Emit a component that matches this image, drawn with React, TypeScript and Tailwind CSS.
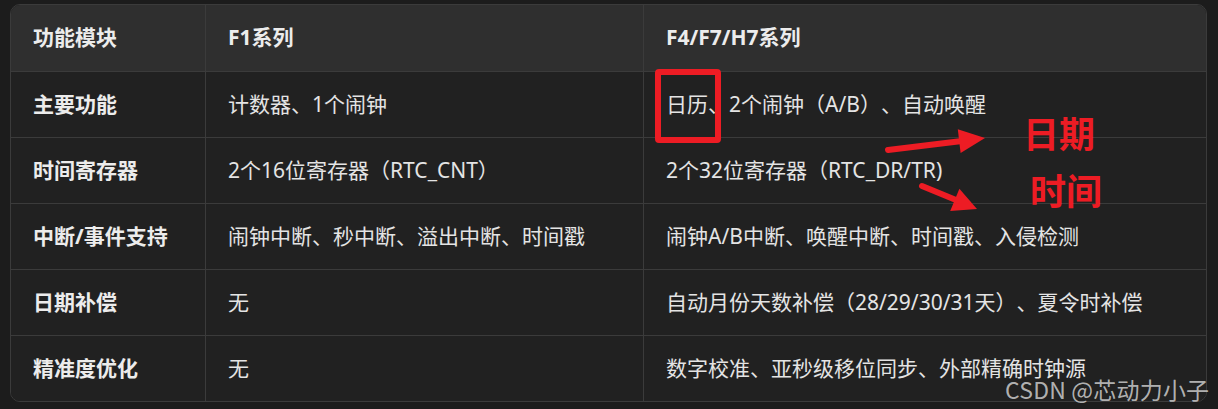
import React from "react";

type Row = { label: string; f1: string; f4: string };

const rows: Row[] = [
  { label: "主要功能", f1: "计数器、1个闹钟", f4: "日历、2个闹钟（A/B）、自动唤醒" },
  { label: "时间寄存器", f1: "2个16位寄存器（RTC_CNT）", f4: "2个32位寄存器（RTC_DR/TR)" },
  { label: "中断/事件支持", f1: "闹钟中断、秒中断、溢出中断、时间戳", f4: "闹钟A/B中断、唤醒中断、时间戳、入侵检测" },
  { label: "日期补偿", f1: "无", f4: "自动月份天数补偿（28/29/30/31天）、夏令时补偿" },
  { label: "精准度优化", f1: "无", f4: "数字校准、亚秒级移位同步、外部精确时钟源" },
];

function Cell({ children, first, head, bold }: { children: React.ReactNode; first?: boolean; head?: boolean; bold?: boolean }) {
  return (
    <div
      className={
        "flex items-center px-[22px] whitespace-nowrap " +
        (first ? "" : "border-l border-[#3b3b3b] ") +
        (head ? "h-[66px] bg-[#2f2f2f] " : "h-[66px] border-t border-[#3b3b3b] bg-[#212121] ") +
        (bold ? "font-bold text-[#ececec]" : "text-[#e4e4e4]")
      }
    >
      {children}
    </div>
  );
}

export default function App() {
  return (
    <div className="relative w-[1218px] h-[409px] overflow-hidden bg-[#1c1c1c] pt-[4px] pl-[10px] font-['Noto_Sans','Noto_Sans_CJK_SC',sans-serif] text-[21px] [text-spacing-trim:space-all]">
      <div className="w-[1197px] rounded-[10px] border border-[#3b3b3b] overflow-hidden grid grid-cols-[194px_438px_1fr]">
        <Cell first head bold>功能模块</Cell>
        <Cell head bold>F1系列</Cell>
        <Cell head bold>F4/F7/H7系列</Cell>
        {rows.map((r) => (
          <React.Fragment key={r.label}>
            <Cell first bold>{r.label}</Cell>
            <Cell>{r.f1}</Cell>
            <Cell>{r.f4}</Cell>
          </React.Fragment>
        ))}
      </div>

      {/* red annotations */}
      <div className="absolute left-[655px] top-[69px] w-[66px] h-[74px] border-[6px] border-[#ed1c24] rounded-[4px]" />
      <svg className="absolute inset-0 pointer-events-none" width="1218" height="409">
        <line x1="888" y1="150" x2="962" y2="141" stroke="#ed1c24" strokeWidth="6" strokeLinecap="round" />
        <polygon points="985,138 960.6,153 957.8,129.2" fill="#ed1c24" />
        <line x1="922" y1="186" x2="956" y2="200" stroke="#ed1c24" strokeWidth="6" strokeLinecap="round" />
        <polygon points="977,209 950.2,211 959.4,188.8" fill="#ed1c24" />
      </svg>
      <div className="absolute left-[1023px] top-[114px] text-[36px] leading-[36px] font-bold text-[#ed1c24] font-['Noto_Sans_CJK_SC',sans-serif]">日期</div>
      <div className="absolute left-[1030px] top-[171px] text-[36px] leading-[36px] font-bold text-[#ed1c24] font-['Noto_Sans_CJK_SC',sans-serif]">时间</div>

      {/* watermark */}
      <div className="absolute left-[1005px] top-[374px] text-[23px] leading-[30px] tracking-[0.2px] text-[#c4c4c4]/90 font-['Noto_Sans_CJK_SC',sans-serif]">
        CSDN @芯动力小子
      </div>
    </div>
  );
}
